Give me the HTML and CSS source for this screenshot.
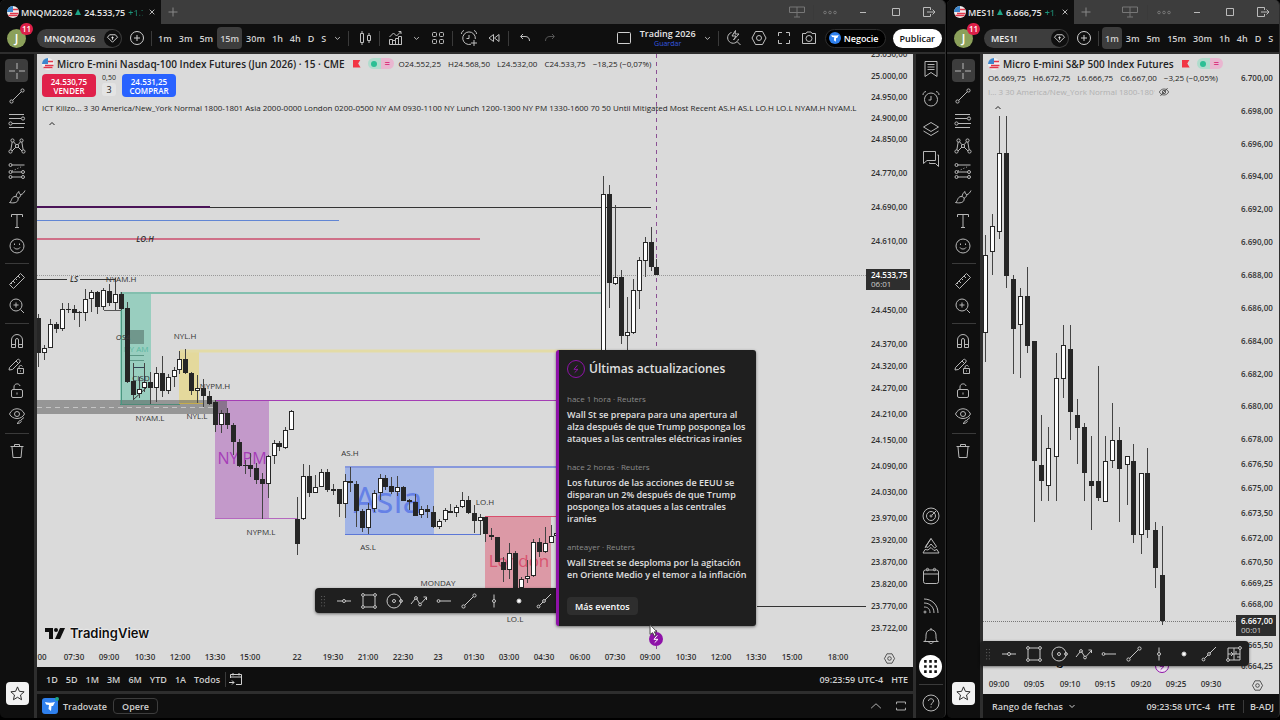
FILE: index.html
```html
<!DOCTYPE html>
<html lang="es">
<head>
    <meta charset="UTF-8">
    <meta name="viewport" content="width=device-width, initial-scale=1.0">
    <title>MNQM2026 24.533,75</title>
    <link rel="stylesheet" href="styles.css">
</head>
<body>

    <!-- Iconos -->
    <svg class="sprite" width="0" height="0" aria-hidden="true">
        <symbol id="cross" viewBox="0 0 18 18"><path d="M9 1v6M9 11v6M1 9h6M11 9h6"/></symbol>
        <symbol id="line" viewBox="0 0 18 18"><circle cx="3.5" cy="14.5" r="1.6"/><circle cx="14.5" cy="3.5" r="1.6"/><path d="M4.7 13.3 13.3 4.7"/></symbol>
        <symbol id="fib" viewBox="0 0 18 18"><path d="M1 2.5h15M1 6.5h12M4 11.5h13M1 15.5h15"/><circle cx="15" cy="6.5" r="1.6"/><circle cx="2.5" cy="11.5" r="1.6"/></symbol>
        <symbol id="pattern" viewBox="0 0 18 18"><circle cx="2.5" cy="14.5" r="1.6"/><circle cx="4.5" cy="3.5" r="1.6"/><circle cx="9" cy="9" r="1.6"/><circle cx="13.5" cy="3.5" r="1.6"/><circle cx="15.5" cy="14.5" r="1.6"/><path d="M2.8 13 4.2 5M5.5 4.700 8 7.800M10 7.800 12.600 4.700M13.800 5 15.200 13M4 14l4-4M10 10l4 4"/></symbol>
        <symbol id="forecast" viewBox="0 0 18 18"><path d="M3.500 3h13M3.500 10h10M3.500 15h10"/><path d="m4 9 11-5" stroke-dasharray="1 2"/><circle cx="2.500" cy="3" r="1.500"/><circle cx="2.500" cy="10" r="1.500"/><circle cx="2.500" cy="15" r="1.500"/><circle cx="15" cy="10" r="1.500"/><circle cx="15" cy="15" r="1.500"/></symbol>
        <symbol id="brush" viewBox="0 0 18 18"><path d="M1.500 15.500c2.500-1 1.500-5.500 5.500-6 2.500 0 3.500 1.500 3 3.500-.5 2.500-4 3.500-8.500 2.500zM8 9.500c0-2 2-4.500 3-5 0 2 .5 3 2 3s3-2 4-4M10 11.500c1.500-1 2.500-2 3-4"/></symbol>
        <symbol id="type" viewBox="0 0 18 18"><path d="M3.500 5V2.500h11V5M9 2.500v13M7 15.500h4"/></symbol>
        <symbol id="smile" viewBox="0 0 18 18"><circle cx="9" cy="9" r="7"/><path d="M6 10.500c1 2 5 2 6 0M6.500 6.500v1.500M11.500 6.500v1.500"/></symbol>
        <symbol id="ruler" viewBox="0 0 18 18"><path d="m1.500 12.500 11-11 4 4-11 11zM5 9l2 2M7.500 6.500l1.500 1.500M10 4l2 2M3 11l1 1"/></symbol>
        <symbol id="zoomin" viewBox="0 0 18 18"><circle cx="8" cy="8" r="6"/><path d="m12.500 12.500 3.500 3.500M8 5.500v5M5.500 8h5"/></symbol>
        <symbol id="magnet" viewBox="0 0 18 18"><path d="M3.500 15.500V8a5.500 5.500 0 0 1 11 0v7.500h-4V8a1.500 1.500 0 0 0-3 0v7.500zM3.500 12.500h4M10.500 12.500h4"/></symbol>
        <symbol id="pencil" viewBox="0 0 18 18"><path d="m1.500 10.500 8-8c1-1 3.500 1 2.500 2.500l-7.500 7.500-3.500.5zM8 4l2.500 2.500M9.500 11.500h6v5h-6zM11 11.500V10c0-2 3-2 3.500-.5M12.500 13.500v1"/></symbol>
        <symbol id="lock" viewBox="0 0 18 18"><rect x="3.500" y="7.500" width="11" height="8" rx="1.500"/><path d="M6 7V5c0-4 5.500-4 6-1M9 10.500v2"/></symbol>
        <symbol id="eye" viewBox="0 0 18 18"><path d="M1.500 7c3-7 12-7 15 0-3 6-12 6-15 0z"/><circle cx="9" cy="7" r="2.500"/><path d="M9 16.500c2-.5 1-3 3.500-3 1.500 0 1 3-3.500 3zM13 13l3-2.500"/></symbol>
        <symbol id="trash" viewBox="0 0 18 18"><path d="M2.500 4.500h13M6.500 4V2.500h5V4M4 5l1 10.500h8L14 5"/></symbol>
        <symbol id="star" viewBox="0 0 18 18"><path d="m9 2 2 4.700 5 .5-3.800 3.400 1.100 5L9 13l-4.300 2.600 1.100-5L2 7.200l5-.5z"/></symbol>
        <symbol id="watch" viewBox="0 0 18 18"><path d="M3 1.500h12v15l-6-4-6 4zM5.500 4.500h7M5.500 7h7M5.500 9.500h7"/></symbol>
        <symbol id="alarm" viewBox="0 0 18 18"><circle cx="9" cy="9.500" r="6.500"/><path d="M9 6v4H6.500M1 5c0-2 1-3 3-3.500M17 5c0-2-1-3-3-3.500"/></symbol>
        <symbol id="alertadd" viewBox="0 0 18 18"><path d="M11 15.200A6.300 6.300 0 1 1 15.300 10M9 6v3.500H6.500M1.500 5c0-2 1-3 2.500-3.500M16.500 5c0-2-1-3-2.500-3.500M14 11v6M11 14h6"/></symbol>
        <symbol id="layers" viewBox="0 0 18 18"><path d="m9 2.500 7.500 4.500L9 11.500 1.500 7zM1.500 11 9 15.500l7.500-4.500"/></symbol>
        <symbol id="chat" viewBox="0 0 18 18"><path d="M1.500 1.500h12v9H5l-3.500 3zM15.500 5h1v11.500l-3-3h-6v-1"/></symbol>
        <symbol id="radar" viewBox="0 0 18 18"><circle cx="9" cy="9" r="8"/><circle cx="9" cy="9" r="4.500"/><circle cx="9" cy="9" r="1"/><path d="m10 8 4-4"/></symbol>
        <symbol id="pine" viewBox="0 0 18 18"><path d="m9 1.500 5.500 8-2 1.500-3.500-4-3 3.500-2.500-1zM9 1.500 3 11M3 12.500l-2 3.500h16l-2-3.500-3 1-3-3-3 2.500z"/></symbol>
        <symbol id="calendar" viewBox="0 0 18 18"><rect x="1.500" y="3" width="15" height="13.500" rx="2"/><path d="M1.500 7h15"/><circle cx="5.500" cy="2.500" r="1.200"/><circle cx="12.500" cy="2.500" r="1.200"/></symbol>
        <symbol id="feed" viewBox="0 0 18 18"><path d="M2 2c8 0 14 6 14 14M2 6c6 0 10 4 10 10M2 10c4 0 6 2 6 6"/><circle cx="3" cy="15" r="1"/></symbol>
        <symbol id="bell" viewBox="0 0 18 18"><path d="M1.500 14.500h15M3 14c1-2 1-3 1-6 0-7 10-7 10 0 0 3 0 4 1 6M7 15c0 2 4 2 4 0M9 1v2"/></symbol>
        <symbol id="apps" viewBox="0 0 18 18"><path d="M4 4h2v2H4zM8 4h2v2H8zM12 4h2v2h-2zM4 8h2v2H4zM8 8h2v2H8zM12 8h2v2h-2zM4 12h2v2H4zM8 12h2v2H8zM12 12h2v2h-2z"/></symbol>
        <symbol id="help" viewBox="0 0 18 18"><circle cx="9" cy="9" r="8"/><path d="M6.500 7c0-3 5-3 5 0 0 2-2.500 2-2.500 4M9 12.500v1"/></symbol>
        <symbol id="gem" viewBox="0 0 18 18"><path d="M5.500 4.500h7l2.500 3-6 6-6-6zM9 6.500v4M7.500 8h3"/></symbol>
        <symbol id="add" viewBox="0 0 18 18"><circle cx="9" cy="9" r="6.500"/><path d="M9 6v6M6 9h6"/></symbol>
        <symbol id="chevron" viewBox="0 0 18 18"><path d="m6.500 8 2.500 2.500L11.500 8"/></symbol>
        <symbol id="up" viewBox="0 0 18 18"><path d="m3.500 11.500 5.500-5 5.500 5"/></symbol>
        <symbol id="collapse" viewBox="0 0 18 18"><path d="m6.500 10 2.500-2.500 2.500 2.500"/></symbol>
        <symbol id="bars" viewBox="0 0 18 18"><path d="M4.500 4.500h3v9h-3zM6 2v2.500M6 13.500V16M11.500 6.500h3v5h-3zM13 4v2.500M13 11.500V14"/></symbol>
        <symbol id="indicator" viewBox="0 0 18 18"><path d="M2.500 15.500v-5h3v5M5.500 15.500v-4h3v4M8.500 11.500v-2h3v6M11.500 15.500v-8h3v8zM2.500 15.500h12M2.500 8l4-4 3 3 4-4M11.500 2.500H14V5"/></symbol>
        <symbol id="grid" viewBox="0 0 18 18"><rect x="3.500" y="3.500" width="4" height="4" rx="1"/><rect x="10.500" y="3.500" width="4" height="4" rx="1"/><rect x="3.500" y="10.500" width="4" height="4" rx="1"/><rect x="10.500" y="10.500" width="4" height="4" rx="1"/></symbol>
        <symbol id="rewind" viewBox="0 0 18 18"><path d="M8.500 5.500v7l-4.500-3.500zM14 5.500v7L9.500 9z"/></symbol>
        <symbol id="undo" viewBox="0 0 18 18"><path d="M7 5 4.500 7.500 7 10M5 7.500h4c3 0 4.500 1.500 4.500 4.500"/></symbol>
        <symbol id="redo" viewBox="0 0 18 18"><path d="m11 5 2.500 2.500L11 10M13 7.500H9c-3 0-4.500 1.500-4.500 4.500"/></symbol>
        <symbol id="square" viewBox="0 0 18 18"><rect x="2.500" y="3.500" width="13" height="11" rx="1"/></symbol>
        <symbol id="quick" viewBox="0 0 18 18"><path d="M6.500 3.500A5.500 5.500 0 1 0 13.500 10M12 12.500l3.500 3.500M10.500 1.500 7 7h4l-2.500 4 5.500-6h-4z"/></symbol>
        <symbol id="hex" viewBox="0 0 18 18"><path d="M5.500 2.500h7L16 9l-3.500 6.500h-7L2 9z"/><circle cx="9" cy="9" r="2.500"/></symbol>
        <symbol id="full" viewBox="0 0 18 18"><path d="M3.500 7V3.500H7M11 3.500h3.500V7M14.500 11v3.500H11M7 14.500H3.500V11"/></symbol>
        <symbol id="camera" viewBox="0 0 18 18"><path d="M2.500 4.500H6L7 3h4l1 1.500h3.500v10h-13z"/><circle cx="9" cy="9.500" r="3"/></symbol>
        <symbol id="layout" viewBox="0 0 18 18"><path d="M1.500 4h15v5.500h-15zM9 4v10M6 14h6"/></symbol>
        <symbol id="dots" viewBox="0 0 18 18"><circle cx="4" cy="9.500" r="1.300"/><circle cx="9" cy="9.500" r="1.300"/><circle cx="14" cy="9.500" r="1.300"/></symbol>
        <symbol id="min" viewBox="0 0 18 18"><path d="M6 9.500h6"/></symbol>
        <symbol id="max" viewBox="0 0 18 18"><path d="M5.500 5.500h7v7h-7z"/></symbol>
        <symbol id="exit" viewBox="0 0 18 18"><path d="M10.500 7V4.500h-7v9h7V11M7 9h8M12.500 6.500 15 9l-2.500 2.500"/></symbol>
        <symbol id="close" viewBox="0 0 18 18"><path d="m6 6 6 6M12 6l-6 6"/></symbol>
        <symbol id="plus" viewBox="0 0 18 18"><path d="M9 4.500v9M4.500 9h9"/></symbol>
        <symbol id="goto" viewBox="0 0 18 18"><path d="M3.500 8V4.500h11v10H9M3.500 7h11M6 3v2.500M12 3v2.500M2 12.500h5M5 10.500l2 2-2 2"/></symbol>
        <symbol id="panel" viewBox="0 0 18 18"><path d="M4 7V4.500h10V7M4 11v2.500h10V11"/></symbol>
        <symbol id="bolt" viewBox="0 0 18 18"><path d="m11 3.500-5 6h6l-5 5" stroke-width="1.500"/></symbol>
        <symbol id="hidden" viewBox="0 0 18 18"><path d="M2 9c3-6 11-6 14 0-3 6-11 6-14 0zM3.500 15 14.500 3"/><circle cx="9" cy="9" r="2.500"/></symbol>
        <symbol id="grip" viewBox="0 0 18 18"><path d="M7 4h1M10 4h1M7 7.500h1M10 7.500h1M7 11h1M10 11h1M7 14.500h1M10 14.500h1"/></symbol>
        <symbol id="hline" viewBox="0 0 18 18"><path d="M2 9h5.500M10.500 9H16"/><circle cx="9" cy="9" r="1.500"/></symbol>
        <symbol id="rect" viewBox="0 0 18 18"><path d="M4.500 3h9M4.500 15h9M3 4.500v9M15 4.500v9"/><circle cx="3" cy="3" r="1.400"/><circle cx="15" cy="3" r="1.400"/><circle cx="3" cy="15" r="1.400"/><circle cx="15" cy="15" r="1.400"/></symbol>
        <symbol id="circle" viewBox="0 0 18 18"><circle cx="9" cy="9" r="7"/><circle cx="9" cy="9" r="1.500"/><circle cx="16" cy="9" r="1.400"/></symbol>
        <symbol id="path" viewBox="0 0 18 18"><path d="m1 12 4-5M6.500 6.500l3 5M11 11.500l5.500-6M13.500 5h3v3"/><circle cx="6" cy="6" r="1.400"/><circle cx="10" cy="12.500" r="1.400"/></symbol>
        <symbol id="hray" viewBox="0 0 18 18"><path d="M5 9h11"/><circle cx="3.500" cy="9" r="1.400"/></symbol>
        <symbol id="vline" viewBox="0 0 18 18"><path d="M9 2.500v5M9 10.500v5"/><circle cx="9" cy="9" r="1.500"/></symbol>
        <symbol id="dot" viewBox="0 0 18 18"><circle cx="9" cy="9" r="2" fill="#fff"/></symbol>
        <symbol id="ray" viewBox="0 0 18 18"><path d="m4.500 13.500 3.500-3.500M10 8l6-6"/><circle cx="3.500" cy="14.500" r="1.400"/><circle cx="9" cy="9" r="1.400"/></symbol>
        <symbol id="gann" viewBox="0 0 18 18"><path d="M3 14V3h11M15 4v11H4M3 9h12M9 3v12M6 7l2 2-2 2M11 6v3M12 12h3"/><circle cx="3" cy="15" r="1.400"/><circle cx="15" cy="3" r="1.400"/></symbol>
        <symbol id="flag" viewBox="0 0 12 12"><circle cx="6" cy="6" r="6" fill="#f0f0f0" stroke="none"/><path d="M3 7.500h8.500M1.500 9.500h9" stroke="#e0364a" stroke-width="1.500"/><path d="M6 3.500h5" stroke="#e0364a" stroke-width="1.500"/><path d="M0 6a6 6 0 0 1 6-6v6z" fill="#3d86cc" stroke="none"/></symbol>
        <symbol id="tradovate" viewBox="0 0 16 16"><rect width="16" height="16" rx="3" fill="#2f80ed" stroke="none"/><path d="M3 4c3 1 7 1 10 0l-2 4H9.500L9 13 6.500 11 7 7 4 6.500z" fill="#fff" stroke="none"/></symbol>
    </svg>

    <div class="desktop">

        <!-- Ventana principal -->
        <section class="window">
            <div class="titlebar">
                <div class="tab">
                    <svg class="flag"><use href="#flag"/></svg>
                    <span class="tab-text">MNQM2026 <i class="rise"></i> 24.533,75 <span class="gain">+1.79%</span></span>
                    <button class="icon-btn small" aria-label="Cerrar"><svg><use href="#close"/></svg></button>
                </div>
                <button class="icon-btn new-tab" aria-label="Nueva pestaña"><svg><use href="#plus"/></svg></button>
                <div class="window-controls" data-icons="layout | dots min max exit"></div>
            </div>

            <header class="topbar">
                <button class="avatar">J<span class="badge">11</span></button>
                <button class="symbol">MNQM2026<span class="gem"><svg><use href="#gem"/></svg></span></button>
                <button class="icon-btn" aria-label="Comparar"><svg><use href="#add"/></svg></button>
                <span class="divider"></span>
                <nav class="intervals">
                    <button>1m</button><button>3m</button><button>5m</button><button class="active">15m</button><button>30m</button><button>1h</button><button>4h</button><button>D</button><button>S</button>
                </nav>
                <div class="actions" data-icons="chevron | bars | indicator chevron grid | alertadd rewind | undo redo"></div>
                <div class="topbar-right">
                    <button class="icon-btn" aria-label="Diseño"><svg><use href="#square"/></svg></button>
                    <button class="layout-name">Trading 2026<small>Guardar</small></button>
                    <div class="actions" data-icons="chevron | quick hex full camera"></div>
                    <button class="trade"><svg><use href="#tradovate"/></svg>Negocie</button>
                    <button class="publish">Publicar</button>
                </div>
            </header>

            <div class="workspace">
                <aside class="tools">
                    <div class="tool-list" data-icons="cross line fib pattern forecast brush type smile | ruler zoomin | magnet pencil lock eye | trash"></div>
                    <button class="star" aria-label="Favoritos"><svg><use href="#star"/></svg></button>
                </aside>

                <main class="center">
                    <div class="chart">
                        <div class="plot">
                            <svg class="drawing" id="plot-main"></svg>
                            <div class="legend">
                                <div class="legend-row">
                                    <svg class="flag"><use href="#flag"/></svg>
                                    <h1>Micro E-mini Nasdaq-100 Index Futures (Jun 2026) · 15 · CME</h1>
                                    <i class="pennant"></i>
                                    <span class="status"><i></i><b>=</b></span>
                                    <span class="ohlc"><span>O24.552,25</span><span>H24.568,50</span><span>L24.532,00</span><span>C24.533,75</span><span>−18,25 (−0,07%)</span></span>
                                </div>
                                <div class="orders">
                                    <button class="sell">24.530,75<span>VENDER</span></button>
                                    <div class="spread">0,50<span>3</span></div>
                                    <button class="buy">24.531,25<span>COMPRAR</span></button>
                                </div>
                                <div class="study">ICT Killzo… 3 30 America/New_York Normal 1800-1801 Asia 2000-0000 London 0200-0500 NY AM 0930-1100 NY Lunch 1200-1300 NY PM 1330-1600 70 50 Until Mitigated Most Recent AS.H AS.L LO.H LO.L NYAM.H NYAM.L</div>
                                <button class="icon-btn dark collapse" aria-label="Contraer"><svg><use href="#collapse"/></svg></button>
                            </div>
                            <div class="logo"><svg viewBox="0 0 20 11"><path d="M0 0h8v11H4V4H0z"/><circle cx="11" cy="2" r="2"/><path d="M15 0h5l-5 11h-5z"/></svg>TradingView</div>
                            <div class="favorites fav-main" data-icons="grip hline rect circle path hray line vline dot ray gann"></div>
                            <span class="event"><svg><use href="#bolt"/></svg></span>

                            <!-- Noticias -->
                            <article class="news">
                                <h2><span class="news-icon"><svg><use href="#bolt"/></svg></span>Últimas actualizaciones</h2>
                                <div class="news-item">
                                    <small>hace 1 hora · Reuters</small>
                                    <p>Wall St se prepara para una apertura al alza después de que Trump posponga los ataques a las centrales eléctricas iraníes</p>
                                </div>
                                <div class="news-item">
                                    <small>hace 2 horas · Reuters</small>
                                    <p>Los futuros de las acciones de EEUU se disparan un 2% después de que Trump posponga los ataques a las centrales iraníes</p>
                                </div>
                                <div class="news-item">
                                    <small>anteayer · Reuters</small>
                                    <p>Wall Street se desploma por la agitación en Oriente Medio y el temor a la inflación</p>
                                </div>
                                <button>Más eventos</button>
                            </article>
                            <svg class="cursor" viewBox="0 0 10 15"><path d="M1 1v11l3-2 2 4 2-1-2-4h3z" fill="#fff" stroke="#333"/></svg>
                        </div>
                        <svg class="price-axis" id="price-main"></svg>
                        <svg class="time-axis" id="time-main"></svg>
                        <button class="icon-btn dark axis-settings" aria-label="Configuración"><svg><use href="#hex"/></svg></button>
                    </div>

                    <div class="rangebar">
                        <nav class="ranges">
                            <button>1D</button><button>5D</button><button>1M</button><button>3M</button><button>6M</button><button>YTD</button><button>1A</button><button>Todos</button>
                        </nav>
                        <span class="divider"></span>
                        <button class="icon-btn goto" aria-label="Ir a"><svg><use href="#goto"/></svg></button>
                        <span class="clock"><span>09:23:59 UTC-4</span><span>HTE</span></span>
                    </div>
                    <footer class="broker">
                        <span class="broker-logo"><svg><use href="#tradovate"/></svg></span>
                        <span>Tradovate</span>
                        <button class="operate">Opere</button>
                        <div class="actions broker-right" data-icons="up panel"></div>
                    </footer>
                </main>

                <aside class="sidebar">
                    <div class="side-list" data-icons="watch alarm layers chat"></div>
                    <div class="side-list" data-icons="radar pine calendar feed bell apps | help"></div>
                </aside>
            </div>
        </section>

        <!-- Ventana secundaria -->
        <section class="window second">
            <div class="titlebar">
                <div class="tab">
                    <svg class="flag"><use href="#flag"/></svg>
                    <span class="tab-text">MES1! <i class="rise"></i> 6.666,75 <span class="gain">+1.60%</span></span>
                    <button class="icon-btn small" aria-label="Cerrar"><svg><use href="#close"/></svg></button>
                </div>
                <button class="icon-btn new-tab" aria-label="Nueva pestaña"><svg><use href="#plus"/></svg></button>
                <div class="window-controls" data-icons="layout | dots min max exit"></div>
            </div>

            <header class="topbar">
                <button class="avatar">J<span class="badge">11</span></button>
                <button class="symbol">MES1!<span class="gem"><svg><use href="#gem"/></svg></span></button>
                <button class="icon-btn" aria-label="Comparar"><svg><use href="#add"/></svg></button>
                <span class="divider"></span>
                <nav class="intervals">
                    <button class="active">1m</button><button>3m</button><button>5m</button><button>15m</button><button>30m</button><button>1h</button><button>4h</button><button>D</button><button>S</button>
                </nav>
            </header>

            <div class="workspace">
                <aside class="tools">
                    <div class="tool-list" data-icons="cross line fib pattern forecast brush type smile | ruler zoomin | magnet pencil lock eye | trash"></div>
                    <button class="star" aria-label="Favoritos"><svg><use href="#star"/></svg></button>
                </aside>

                <main class="center">
                    <div class="chart">
                        <div class="plot">
                            <svg class="drawing" id="plot-side"></svg>
                            <div class="legend">
                                <div class="legend-row">
                                    <svg class="flag"><use href="#flag"/></svg>
                                    <h1>Micro E-mini S&amp;P 500 Index Futures</h1>
                                    <i class="pennant"></i>
                                    <span class="status"><i></i><b>=</b></span>
                                </div>
                                <div class="ohlc second-row"><span>O6.669,75</span><span>H6.672,75</span><span>L6.666,75</span><span>C6.667,00</span><span>−3,25 (−0,05%)</span></div>
                                <div class="study off"><span>I… 3 30 America/New_York Normal 1800-1801</span><svg><use href="#hidden"/></svg></div>
                                <button class="icon-btn dark collapse" aria-label="Contraer"><svg><use href="#collapse"/></svg></button>
                            </div>
                            <div class="logo"><svg viewBox="0 0 20 11"><path d="M0 0h8v11H4V4H0z"/><circle cx="11" cy="2" r="2"/><path d="M15 0h5l-5 11h-5z"/></svg>TradingView</div>
                            <span class="event outline"><svg><use href="#bolt"/></svg></span>
                            <div class="favorites fav-side" data-icons="grip hline rect circle path hray line vline dot ray gann"></div>
                        </div>
                        <svg class="price-axis" id="price-side"></svg>
                        <svg class="time-axis" id="time-side"></svg>
                        <button class="icon-btn dark axis-settings" aria-label="Configuración"><svg><use href="#hex"/></svg></button>
                    </div>
                    <div class="rangebar">
                        <button class="date-range">Rango de fechas<svg><use href="#chevron"/></svg></button>
                        <span class="clock"><span>09:23:58 UTC-4</span><span>HTE</span><span class="adj">B-ADJ</span></span>
                    </div>
                </main>
            </div>
        </section>
    </div>

    <script src="script.js"></script>
</body>
</html>
```
FILE: styles.css
```css
* {
    box-sizing: border-box;
}

body {
    margin: 0;
    background: #000;
    color: #d0d0d0;
    font-family: "Open Sans", "Noto Sans", sans-serif;
    font-size: 9px;
}

button {
    padding: 0;
    border: none;
    background: none;
    color: inherit;
    font: inherit;
    cursor: pointer;
}

svg {
    display: block;
    fill: none;
    stroke: currentColor;
    stroke-width: 1;
}

.sprite {
    position: absolute;
}

h1, h2, p {
    margin: 0;
}

.desktop {
    display: grid;
    grid-template-columns: 946fr 334fr;
    height: 100vh;
    padding-bottom: 2px;
}

.window {
    display: flex;
    flex-direction: column;
    min-width: 0;
    background: #0f0f0f;
    border-right: 1px solid #2e2e2e;
    border-radius: 5px;
    overflow: hidden;
}

.second {
    border-left: 1px solid #000;
}

/* Barra de título */
.titlebar {
    display: flex;
    align-items: center;
    height: 24px;
    background: #3d3d3d;
}

.tab {
    display: flex;
    align-items: center;
    gap: 2px;
    height: 24px;
    padding: 0 2px 0 7px;
    background: #0f0f0f;
    color: #e6e6e6;
    font-weight: 600;
}

.flag {
    flex: none;
    width: 12px;
    height: 12px;
}

.tab-text {
    display: flex;
    align-items: center;
    gap: 3px;
    width: 122px;
    overflow: hidden;
    white-space: nowrap;
}

.second .tab-text {
    width: 88px;
}

.rise {
    border: 3px solid transparent;
    border-top: none;
    border-bottom: 6px solid #1fa587;
}

.gain {
    background: linear-gradient(90deg, #1fa587, #0f0f0f 26px);
    background-clip: text;
    -webkit-background-clip: text;
    color: transparent;
}

.icon-btn {
    display: flex;
    flex: none;
    align-items: center;
    justify-content: center;
    width: 25px;
    height: 23px;
}

.icon-btn svg {
    width: 18px;
    height: 18px;
}

.icon-btn.small {
    width: 14px;
}

.icon-btn.dark {
    color: #222;
}

.new-tab {
    width: 23px;
    color: #888;
}

.window-controls {
    display: flex;
    align-items: center;
    margin-left: auto;
    color: #bbb;
}

.window-controls .icon-btn {
    width: 33px;
}

.window-controls .icon-btn:nth-child(-n+3) {
    color: #777;
    width: 32px;
}

.second .window-controls .icon-btn:nth-child(1) {
    width: 34px;
}

.divider {
    flex: none;
    width: 1px;
    height: 15px;
    margin: 0 3px 0 2px;
    background: #3a3a3a;
}

.window-controls .divider {
    margin: 0;
}

/* Barra superior */
.topbar {
    display: flex;
    align-items: center;
    height: 30px;
    padding: 0 3px 0 7px;
    border-bottom: 2px solid #2e2e2e;
    font-weight: 600;
}

.avatar {
    position: relative;
    flex: none;
    width: 19px;
    height: 19px;
    border-radius: 50%;
    background: #8ba05a;
    color: #fff;
    font-size: 12px;
    line-height: 19px;
}

.badge {
    position: absolute;
    top: -6px;
    right: -7px;
    width: 13px;
    height: 12px;
    border-radius: 6px;
    background: #dc1f48;
    font-size: 8px;
    line-height: 12px;
}

.symbol {
    display: flex;
    flex: none;
    align-items: center;
    justify-content: space-between;
    width: 85px;
    height: 19px;
    margin: 0 2px 0 11px;
    padding: 0 1px 0 7px;
    border-radius: 10px;
    background: #3d3d3d;
    color: #f0f0f0;
}

.gem {
    padding: 1px;
    border-radius: 50%;
    background: #0f0f0f;
}

.gem svg {
    width: 15px;
    height: 15px;
}

.intervals, .ranges {
    display: flex;
}

.intervals {
    gap: 1px;
}

.intervals button {
    height: 22px;
    padding: 0 3px;
    border-radius: 4px;
}

.intervals .active {
    background: #3d3d3d;
}

.actions {
    display: flex;
    align-items: center;
    color: #c0c0c0;
}

.actions .icon-btn[aria-label="chevron"] {
    width: 17px;
}

.actions .icon-btn[aria-label="redo"] {
    color: #555;
}

.topbar-right {
    display: flex;
    align-items: center;
    margin-left: auto;
}

.layout-name {
    margin: 0 3px;
    color: #e6e6e6;
    line-height: 11px;
}

.layout-name small {
    display: block;
    color: #3458e0;
    font-size: 7px;
    font-weight: 400;
    line-height: 9px;
}

.trade {
    display: flex;
    align-items: center;
    gap: 3px;
    height: 19px;
    margin: 0 7px 0 3px;
    padding: 0 6px 0 3px;
    border: 1px solid #2e2e2e;
    border-radius: 10px;
    background: #000;
    color: #fff;
}

.trade svg {
    width: 12px;
    height: 12px;
    border-radius: 50%;
}

.publish {
    height: 19px;
    padding: 0 7px;
    border-radius: 10px;
    background: #fff;
    color: #0f0f0f;
}

/* Zona de trabajo */
.workspace {
    display: flex;
    flex: 1;
    min-height: 0;
}

.tools {
    display: flex;
    flex: none;
    flex-direction: column;
    align-items: center;
    justify-content: space-between;
    width: 37px;
    padding: 4px 0 13px;
    border-right: 3px solid #2e2e2e;
    color: #b8b8b8;
}

.second .tools {
    width: 36px;
}

.tool-list .icon-btn {
    width: 23px;
    height: 25px;
}

.tool-list .icon-btn:first-child {
    height: 23px;
    margin: 1px 0;
    border-radius: 4px;
    background: #3d3d3d;
}

.tool-list .divider, .side-list .divider {
    display: block;
    width: 24px;
    height: 1px;
    margin: 5px 0 4px;
}

.star {
    padding: 3px;
    border-radius: 4px;
    background: #f2f2f2;
    color: #222;
}

.star svg {
    width: 17px;
    height: 17px;
}

.center {
    display: flex;
    flex: 1;
    flex-direction: column;
    min-width: 0;
}

.chart {
    display: grid;
    flex: 1;
    grid-template-columns: minmax(0, 1fr) 47px;
    grid-template-rows: minmax(0, 1fr) 18px;
    min-height: 0;
    background: #dadada;
    color: #333;
}

.second .chart {
    grid-template-columns: minmax(0, 1fr) 43px;
}

.plot {
    position: relative;
    min-width: 0;
}

.drawing, .price-axis, .time-axis {
    width: 100%;
    height: 100%;
}

.drawing {
    position: absolute;
}

.chart text {
    stroke: none;
    fill: #333;
    font-size: 8px;
}

.chart .axis-label {
    font-weight: 600;
}

.chart .mid {
    text-anchor: middle;
}

.axis-settings {
    width: 100%;
    height: 18px;
}

.axis-settings svg {
    width: 13px;
    height: 13px;
}

/* Leyenda */
.legend {
    position: absolute;
    top: 1px;
    left: 5px;
    right: 4px;
    color: #222;
}

.legend-row {
    display: flex;
    align-items: center;
    gap: 3px;
    height: 17px;
}

h1 {
    font-size: 10px;
    font-weight: 600;
    white-space: nowrap;
}

.pennant {
    width: 8px;
    height: 8px;
    margin: 0 4px 0 5px;
    background: #f23645;
    clip-path: polygon(0 0, 100% 0, 70% 50%, 100% 100%, 0 100%);
}

.status {
    display: flex;
    align-items: center;
    justify-content: space-around;
    width: 26px;
    height: 11px;
    border-radius: 6px;
    background: linear-gradient(90deg, #b0dccd 50%, #e9b6d0 50%);
}

.status i {
    width: 6px;
    height: 6px;
    border-radius: 50%;
    background: #2bbf94;
}

.status b {
    color: #d8377f;
    line-height: 9px;
}

.ohlc {
    display: flex;
    gap: 7px;
    margin-left: 2px;
    font-size: 8px;
    white-space: nowrap;
}

.ohlc.second-row {
    margin: 0;
    line-height: 11px;
}

.orders {
    display: flex;
    gap: 6px;
    margin-top: 2px;
    text-align: center;
}

.orders button {
    width: 54px;
    height: 23px;
    border-radius: 4px;
    color: #fff;
    font-size: 8px;
    font-weight: 600;
    line-height: 9px;
}

.orders span {
    display: block;
}

.sell {
    background: #e0214a;
}

.buy {
    background: #2962ff;
}

.spread {
    width: 14px;
    font-size: 7px;
    line-height: 7px;
    white-space: nowrap;
}

.spread span {
    margin-top: 2px;
    border-radius: 3px;
    background: #e4e4e4;
    font-size: 9px;
    line-height: 13px;
}

.study {
    margin-top: 4px;
    overflow: hidden;
    font-size: 8px;
    line-height: 13px;
    white-space: nowrap;
}

.study.off {
    display: flex;
    align-items: center;
    gap: 3px;
    margin-top: 2px;
}

.study.off span {
    width: 167px;
    overflow: hidden;
    color: #b0b0b0;
}

.study.off svg {
    width: 12px;
    height: 12px;
}

.collapse {
    width: 19px;
    height: 19px;
}

.logo {
    position: absolute;
    bottom: 6px;
    left: 8px;
    display: flex;
    align-items: center;
    gap: 5px;
    color: #0f0f0f;
    font-family: Inter, sans-serif;
    font-size: 13px;
    font-weight: 600;
    line-height: 20px;
    text-shadow: 0 0 2px #fff, 0 0 2px #fff;
}

.logo svg {
    width: 20px;
    height: 11px;
    fill: #0f0f0f;
    stroke: none;
}

/* Herramientas favoritas */
.favorites {
    position: absolute;
    display: flex;
    align-items: center;
    height: 25px;
    padding-right: 3px;
    border-radius: 4px;
    background: #1f1f1f;
    box-shadow: 0 1px 3px rgba(0, 0, 0, 0.5);
    color: #c8c8c8;
}

.favorites .icon-btn:first-child {
    width: 16px;
    color: #777;
}

.fav-main {
    bottom: 36px;
    left: 278px;
}

.fav-side {
    bottom: 10px;
    left: -3px;
    z-index: 2;
}

.event {
    position: absolute;
    bottom: 3px;
    left: 612px;
    width: 14px;
    height: 14px;
    padding: 1px;
    border-radius: 50%;
    background: #8e12a8;
    color: #fff;
}

.event svg {
    width: 12px;
    height: 12px;
}

.event.outline {
    left: 172px;
    padding: 0;
    border: 1px solid #8e12a8;
    background: #f2e6f5;
    color: #8e12a8;
}

.cursor {
    position: absolute;
    bottom: 12px;
    left: 612px;
    width: 9px;
    height: 13px;
}

/* Panel de noticias */
.news {
    position: absolute;
    top: 296px;
    left: 519px;
    width: 200px;
    padding: 10px 3px 11px 8px;
    border-left: 3px solid #8e12a8;
    border-radius: 3px;
    background: #1f1f1f;
    box-shadow: 0 1px 3px rgba(0, 0, 0, 0.5);
    color: #e0e0e0;
}

.news h2 {
    display: flex;
    align-items: center;
    gap: 4px;
    margin-bottom: 15px;
    font-size: 12px;
    font-weight: 600;
    line-height: 18px;
}

.news-icon {
    padding: 2px;
    border: 1px solid #8e12a8;
    border-radius: 50%;
    color: #8e12a8;
}

.news-icon svg {
    width: 12px;
    height: 12px;
}

.news-item {
    margin-bottom: 16px;
}

.news small {
    display: block;
    margin-bottom: 5px;
    color: #8c8c8c;
    font-size: 8px;
    line-height: 11px;
}

.news p {
    font-weight: 600;
    line-height: 12px;
}

.news > button {
    height: 18px;
    padding: 0 8px;
    border-radius: 4px;
    background: #2e2e2e;
    color: #fff;
    font-weight: 600;
}

/* Barras inferiores */
.rangebar {
    display: flex;
    align-items: center;
    height: 24px;
    padding: 0 5px;
    font-weight: 600;
}

.ranges button {
    padding: 0 4px;
}

.ranges button:last-child {
    padding-right: 3px;
}

.goto {
    margin-left: -3px;
}

.rangebar .divider {
    margin-right: 0;
}

.clock {
    display: flex;
    gap: 8px;
    margin-left: auto;
}

.adj {
    padding-left: 6px;
    border-left: 1px solid #3a3a3a;
}

.date-range {
    display: flex;
    align-items: center;
    padding-left: 4px;
}

.date-range svg {
    width: 18px;
    height: 18px;
}

.broker {
    display: flex;
    align-items: center;
    gap: 5px;
    height: 27px;
    padding: 0 0 0 5px;
    border-top: 3px solid #2e2e2e;
    font-weight: 600;
}

.broker-logo {
    position: relative;
}

.broker-logo::after {
    content: "";
    position: absolute;
    top: -1px;
    right: -1px;
    width: 4px;
    height: 4px;
    border-radius: 50%;
    background: #1fa587;
}

.broker svg {
    width: 16px;
    height: 16px;
}

.operate {
    height: 16px;
    margin-left: 1px;
    padding: 0 8px;
    border: 1px solid #3d3d3d;
    border-radius: 4px;
}

.broker-right {
    margin-left: auto;
}

/* Barra lateral */
.sidebar {
    display: flex;
    flex: none;
    flex-direction: column;
    justify-content: space-between;
    width: 32px;
    border-left: 3px solid #2e2e2e;
    color: #b8b8b8;
}

.side-list .icon-btn {
    width: 29px;
    height: 30px;
}

.side-list .divider {
    margin: 3px 0 3px 3px;
}

.side-list .icon-btn[aria-label="apps"] svg {
    width: 23px;
    height: 23px;
    border-radius: 50%;
    background: #fff;
    color: #0f0f0f;
    fill: #0f0f0f;
    stroke: none;
}
```
FILE: script.js
```js
const NS = "http://www.w3.org/2000/svg";

// Botones de icono, "|" es un separador
document.querySelectorAll("[data-icons]").forEach(box => {
    box.dataset.icons.split(" ").forEach(name => {
        if (name === "|") {
            box.insertAdjacentHTML("beforeend", '<span class="divider"></span>');
        } else {
            box.insertAdjacentHTML("beforeend", `<button class="icon-btn" aria-label="${name}"><svg><use href="#${name}"/></svg></button>`);
        }
    });
});

function add(parent, tag, attrs, text) {
    const el = document.createElementNS(NS, tag);
    for (const key in attrs) el.setAttribute(key, attrs[key]);
    if (text) el.textContent = text;
    parent.appendChild(el);
    return el;
}

function layer(id, x, y) {
    return add(document.getElementById(id), "g", { transform: `translate(${-x} ${-y})` });
}

function box(g, x1, y1, x2, y2, fill) {
    add(g, "rect", { x: x1, y: y1, width: x2 - x1, height: y2 - y1, fill: fill, stroke: "none" });
}

function line(g, x1, y1, x2, y2, stroke, width, dash) {
    add(g, "line", { x1: x1, y1: y1, x2: x2, y2: y2, stroke: stroke, "stroke-width": width || 1, "stroke-dasharray": dash || "none" });
}

function label(g, x, y, text, style) {
    add(g, "text", { x: x, y: y, class: "mid", style: style || "" }, text);
}

// [x, máximo, techo, suelo, mínimo, 1 = alcista]
function candles(g, data) {
    data.forEach(([x, high, top, bottom, low, up]) => {
        box(g, x, high, x + 1, low, "#444");
        box(g, x - 2, top, x + 3, Math.max(bottom, top + 1), "#262626");
        if (up && bottom - top > 2) box(g, x - 1, top + 1, x + 2, bottom - 1, "#fff");
    });
}

const main = [
    [38,314,318,353,367,0],[44,345,348,353,360,1],[50,319,324,348,348,1],[56,322,324,329,333,0],[62,303,309,329,331,1],
    [68,303,309,310,313,0],[74,305,309,313,320,0],[79,311,312,313,327,0],[85,289,299,313,321,1],[91,290,292,299,312,1],
    [97,291,292,307,314,0],[103,288,290,307,310,1],[109,284,291,303,306,0],[115,278,294,303,310,1],[121,292,294,309,310,0],
    [127,302,308,382,383,0],[133,363,381,395,400,0],[139,377,389,394,398,1],[144,363,382,388,392,1],[150,372,382,388,404,0],
    [156,367,373,388,402,1],[162,356,373,391,397,0],[168,374,377,391,394,1],[174,367,370,377,387,1],[179,351,359,370,374,1],
    [185,349,359,373,374,0],[191,372,373,391,395,0],[197,375,388,391,403,1],[203,379,388,396,407,0],[209,391,396,404,405,0],
    [215,400,402,425,432,0],[221,410,413,425,433,1],[227,408,413,425,429,0],[233,423,425,442,455,0],[239,439,442,466,467,0],
    [245,460,465,466,474,0],[250,453,465,469,477,0],[256,463,468,480,484,0],[262,473,479,484,519,0],[268,455,456,484,498,1],
    [274,440,443,456,464,1],[279,441,443,447,451,0],[285,427,430,448,449,1],[291,410,411,430,430,1],[297,497,519,544,555,0],
    [303,464,476,519,520,1],[309,465,476,493,497,0],[315,475,487,493,493,1],[321,469,472,487,487,1],[327,469,472,490,492,0],
    [333,484,489,491,495,1],[339,489,489,504,517,0],[345,474,481,504,518,1],[350,467,481,483,492,0],[356,481,484,511,527,0],
    [362,509,511,528,532,0],[368,503,509,528,534,1],[374,490,493,509,512,1],[380,474,478,493,500,1],[385,475,478,487,490,0],
    [391,477,486,492,494,0],[397,476,487,492,496,1],[403,486,487,501,501,0],[409,499,500,502,510,0],[415,494,502,516,516,0],
    [421,506,509,515,518,1],[427,505,509,512,518,0],[433,506,512,527,528,0],[439,519,521,527,529,1],[445,508,510,520,522,1],
    [450,504,511,513,513,0],[456,505,507,513,517,1],[462,492,500,507,508,1],[468,496,500,513,514,0],[474,505,513,521,533,0],
    [480,514,517,521,535,1],[485,517,517,534,542,0],[491,528,535,537,540,0],[497,537,537,562,562,0],[503,557,562,570,582,0],
    [509,543,553,570,579,1],[515,551,553,588,588,0],[521,577,579,588,588,1],[527,560,576,579,583,1],[533,539,542,576,577,1],
    [539,538,542,552,557,0],[545,527,543,552,553,1],[551,525,536,543,543,1],[556,533,533,536,536,1],[603,176,194,400,400,1],
    [609,185,194,283,308,0],[615,205,277,284,285,1],[621,270,277,336,344,0],[627,297,332,336,353,1],[633,279,290,333,334,1],
    [639,257,260,291,309,1],[645,237,242,261,277,1],[651,227,242,267,271,0],[656,259,267,275,275,0]
];

const side = [
    [985,235,255,333,362,1],[992,214,226,252,275,1],[999,116,153,232,239,1],[1006,116,153,276,288,0],[1013,275,279,329,374,0],
    [1020,288,296,325,378,1],[1027,267,296,346,353,0],[1034,341,341,461,522,0],[1041,415,465,481,501,0],[1048,427,448,486,501,1],
    [1056,353,378,457,501,1],[1063,325,345,379,398,1],[1070,325,349,412,440,0],[1077,399,415,428,464,0],[1084,423,427,473,501,0],
    [1091,436,481,486,530,0],[1098,366,481,498,501,0],[1105,436,461,502,502,1],[1112,403,440,461,468,1],[1119,427,440,469,522,0],
    [1127,456,456,465,505,1],[1133,444,461,535,543,0],[1141,473,473,535,554,1],[1147,448,473,530,538,0],[1155,522,530,568,588,0],
    [1162,526,575,621,625,0]
];

// Gráfico principal
let g = layer("plot-main", 37, 54);
box(g, 120, 293, 151, 405, "rgba(30, 185, 140, 0.34)");
box(g, 179, 350, 199, 403, "rgba(240, 215, 80, 0.45)");
box(g, 215, 400, 269, 519, "rgba(156, 39, 176, 0.36)");
box(g, 345, 467, 434, 534, "rgba(41, 98, 255, 0.32)");
box(g, 485, 516, 551, 590, "rgba(225, 40, 75, 0.36)");
box(g, 37, 400, 227, 414, "rgba(70, 70, 70, 0.46)");
line(g, 37, 407.5, 215, 407.5, "#c4c4c4", 1, "5 4");
line(g, 37, 207.5, 651, 207.5, "#333");
line(g, 37, 207, 210, 207, "#4a1458", 2);
line(g, 37, 220.5, 339, 220.5, "#6286d4");
line(g, 37, 239, 480, 239, "#cf7088", 2);
line(g, 37, 275.5, 866, 275.5, "#999", 1, "1 1");
line(g, 37, 279.5, 67, 279.5, "#333");
line(g, 80, 279.5, 116, 279.5, "#333");
line(g, 120, 293, 603, 293, "#83bfae", 2);
line(g, 120, 404.5, 180, 404.5, "#4f8b79");
line(g, 180, 351, 603, 351, "#e3dba6", 3);
line(g, 179, 403.5, 204, 403.5, "#c5ab4b");
line(g, 215, 400.5, 557, 400.5, "#a43eb4");
line(g, 215, 518.5, 298, 518.5, "#b568bf");
line(g, 345, 467, 557, 467, "#8798dc", 2);
line(g, 345, 534.5, 481, 534.5, "#5c77d6");
line(g, 485, 516.5, 557, 516.5, "#d94f6d");
line(g, 757, 606.5, 866, 606.5, "#333");
line(g, 656.5, 54, 656.5, 650, "#8b5094", 1, "4 4");
line(g, 104, 310.5, 121, 310.5, "#555");
line(g, 121.5, 310, 121.5, 405, "#4a9680");
box(g, 130, 330, 144, 344, "rgba(50, 70, 65, 0.4)");
line(g, 129, 355.5, 144, 355.5, "#5d9886");
line(g, 129, 360.5, 144, 360.5, "#5d9886");
line(g, 133, 367.5, 145, 367.5, "#345");
line(g, 133, 400, 146, 388, "#333");
label(g, 136, 352, "NY AM", "font-size: 8px; fill: #5cb89f");
label(g, 242, 464, "NY PM", "font-size: 16px; fill: #a63db8");
label(g, 388, 513, "Asia", "font-size: 36px; fill: #6581e6");
label(g, 519, 567, "London", "font-size: 17px; fill: #d8536f");
candles(g, main);
[
    [121,282,"NYAM.H"],[185,339,"NYL.H"],[215,389,"NYPM.H"],[150,421,"NYAM.L"],[197,419,"NYL.L"],[261,535,"NYPM.L"],
    [350,456,"AS.H"],[368,550,"AS.L"],[485,505,"LO.H"],[515,622,"LO.L"],[438,586,"MONDAY"],[141,381,"CISD"]
].forEach(([x, y, text]) => label(g, x, y, text));
label(g, 145, 242, "LO.H", "font-style: italic; font-weight: 600");
label(g, 74, 282, "LS", "font-style: italic; font-weight: 600");
label(g, 123, 340, "OSA", "font-style: italic");

function priceAxis(g, x, data) {
    data.forEach(([y, text]) => add(g, "text", { x: x, y: y + 3, class: "axis-label" }, text));
}

function tag(g, x1, x2, y, price, time) {
    box(g, x1, y, x2, y + 21, "#2e2e2e");
    add(g, "text", { x: x1 + 5, y: y + 9, style: "fill: #fff; font-weight: 600" }, price);
    add(g, "text", { x: x1 + 5, y: y + 18, style: "fill: #ccc" }, time);
}

g = layer("price-main", 866, 54);
priceAxis(g, 871, [
    [54,"25.050,00"],[76,"25.000,00"],[97,"24.950,00"],[118,"24.900,00"],[139,"24.850,00"],[173,"24.770,00"],[207,"24.690,00"],
    [241,"24.610,00"],[310,"24.450,00"],[344,"24.370,00"],[366,"24.320,00"],[388,"24.270,00"],[414,"24.210,00"],[440,"24.150,00"],
    [466,"24.090,00"],[492,"24.030,00"],[518,"23.970,00"],[540,"23.920,00"],[562,"23.870,00"],[584,"23.820,00"],[606,"23.770,00"],
    [628,"23.722,00"]
]);
tag(g, 866, 910, 269, "24.533,75", "06:01");

g = layer("time-main", 37, 649);
[
    [41,":00"],[74,"07:30"],[109,"09:00"],[145,"10:30"],[180,"12:00"],[215,"13:30"],[250,"15:00"],[297,"22"],[333,"19:30"],
    [368,"21:00"],[403,"22:30"],[438,"23"],[474,"01:30"],[509,"03:00"],[544,"04:30"],[580,"06:00"],[615,"07:30"],[650,"09:00"],
    [686,"10:30"],[721,"12:00"],[756,"13:30"],[792,"15:00"],[838,"18:00"]
].forEach(([x, text]) => add(g, "text", { x: x, y: 660, class: "mid axis-label" }, text));

// Gráfico secundario
g = layer("plot-side", 983, 54);
line(g, 983, 621.5, 1236, 621.5, "#777", 1, "1 1");
candles(g, side);

g = layer("price-side", 1236, 54);
priceAxis(g, 1241, [
    [78,"6.700,00"],[111,"6.698,00"],[144,"6.696,00"],[176,"6.694,00"],[209,"6.692,00"],[242,"6.690,00"],[275,"6.688,00"],
    [308,"6.686,00"],[341,"6.684,00"],[374,"6.682,00"],[406,"6.680,00"],[439,"6.678,00"],[464,"6.676,50"],[488,"6.675,00"],
    [513,"6.673,50"],[538,"6.672,00"],[562,"6.670,50"],[583,"6.669,25"],[604,"6.668,00"],[645,"6.665,50"],[666,"6.664,25"]
]);
tag(g, 1236, 1276, 615, "6.667,00", "00:01");

g = layer("time-side", 983, 676);
[[999,"09:00"],[1034,"09:05"],[1070,"09:10"],[1105,"09:15"],[1141,"09:20"],[1176,"09:25"],[1211,"09:30"]]
    .forEach(([x, text]) => add(g, "text", { x: x, y: 687, class: "mid axis-label" }, text));
```
